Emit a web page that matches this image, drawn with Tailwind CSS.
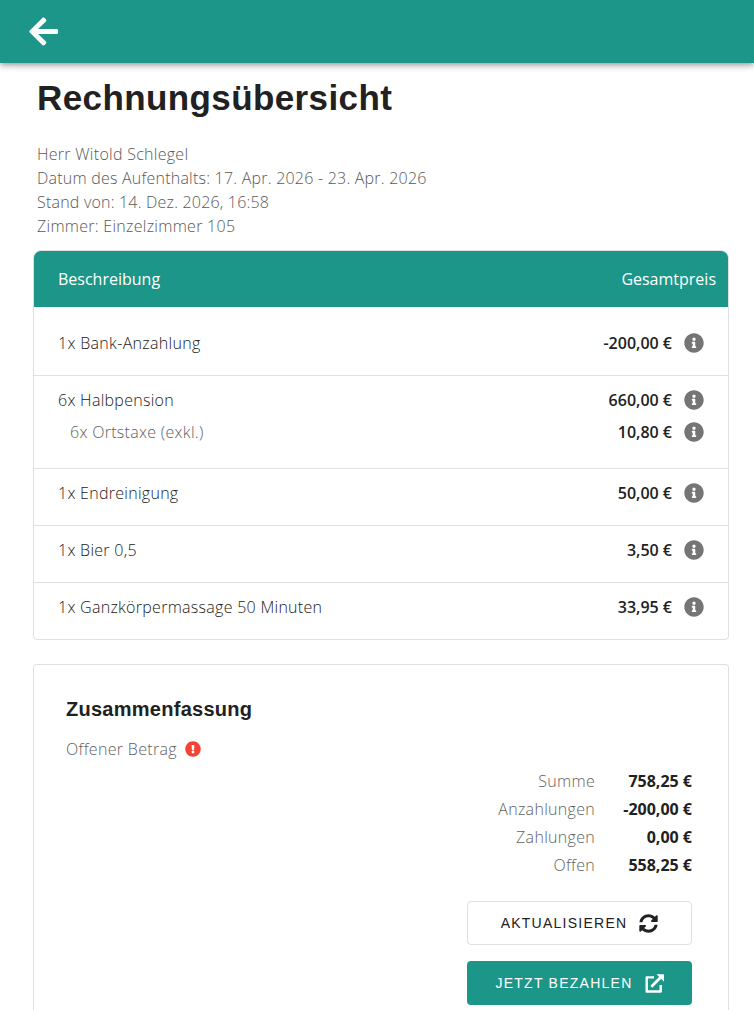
<!DOCTYPE html>
<html lang="de">
<head>
<meta charset="utf-8">
<title>Rechnungsübersicht</title>
<script src="https://cdn.jsdelivr.net/npm/@tailwindcss/browser@4"></script>
</head>
<body class="bg-white h-[1010px] overflow-hidden font-['Open_Sans',sans-serif] text-base leading-6 font-light text-[#212121]">
<svg class="hidden">
  <symbol id="info" viewBox="0 0 512 512"><path d="M256 8C119.043 8 8 119.083 8 256c0 136.997 111.043 248 248 248s248-111.003 248-248C504 119.083 392.957 8 256 8zm0 110c23.196 0 42 18.804 42 42s-18.804 42-42 42-42-18.804-42-42 18.804-42 42-42zm56 254c0 6.627-5.373 12-12 12h-88c-6.627 0-12-5.373-12-12v-24c0-6.627 5.373-12 12-12h12v-64h-12c-6.627 0-12-5.373-12-12v-24c0-6.627 5.373-12 12-12h64c6.627 0 12 5.373 12 12v100h12c6.627 0 12 5.373 12 12v24z"/></symbol>
</svg>
<header class="relative h-[63px] bg-[#1b9688] shadow-[0_2px_4px_-1px_rgba(0,0,0,0.2),0_4px_5px_0_rgba(0,0,0,0.14),0_1px_10px_0_rgba(0,0,0,0.12)] flex items-center pl-[28.5px] pb-px">
  <svg class="w-[29.5px] h-[33px] fill-white" viewBox="0 0 448 512"><path d="M257.5 445.1l-22.2 22.2c-9.4 9.4-24.6 9.4-33.9 0L7 273c-9.4-9.4-9.4-24.6 0-33.9L201.4 44.7c9.4-9.4 24.6-9.4 33.9 0l22.2 22.2c9.5 9.5 9.3 25-.4 34.3L136.6 216H424c13.3 0 24 10.7 24 24v32c0 13.3-10.7 24-24 24H136.6l120.5 114.8c9.8 9.3 10 24.8.4 34.3z"/></svg>
</header>
<main class="pl-[33px] pr-[25px]">
  <h1 class="pl-1 pt-[15px] font-['Liberation_Sans',sans-serif] font-bold text-[35px] leading-10 tracking-[0.4px]">Rechnungsübersicht</h1>
  <div class="pl-1 mt-6 text-[#585858] tracking-[0.28px]">
    <p>Herr Witold Schlegel</p>
    <p class="tracking-[0.22px]">Datum des Aufenthalts: 17. Apr. 2026 - 23. Apr. 2026</p>
    <p class="tracking-[0.2px]">Stand von: 14. Dez. 2026, 16:58</p>
    <p>Zimmer: Einzelzimmer 105</p>
  </div>
  <section class="mt-3 border border-[#e0e0e0] rounded-t-lg rounded-b overflow-hidden">
    <div class="h-14 bg-[#1b9688] text-white font-normal flex items-center justify-between pl-6 pr-3"><span>Beschreibung</span><span>Gesamtpreis</span></div>
    <div class="h-[69px] pt-6 pl-6 pr-6 border-b border-[#e0e0e0]">
      <div class="flex items-center"><span class="grow tracking-[0.32px]">1x Bank-Anzahlung</span><span class="font-semibold">-200,00 €</span><svg class="size-5 ml-3 mb-px fill-[#757575]"><use href="#info"/></svg></div>
    </div>
    <div class="h-[93px] pt-3 pl-6 pr-6 border-b border-[#e0e0e0]">
      <div class="flex items-center"><span class="grow tracking-[0.28px]">6x Halbpension</span><span class="font-semibold">660,00 €</span><svg class="size-5 ml-3 mb-px fill-[#757575]"><use href="#info"/></svg></div>
      <div class="flex items-center mt-2"><span class="grow pl-3 text-[#616161] tracking-[0.3px]">6x Ortstaxe (exkl.)</span><span class="font-semibold">10,80 €</span><svg class="size-5 ml-3 mb-px fill-[#757575]"><use href="#info"/></svg></div>
    </div>
    <div class="h-[57px] pt-3 pl-6 pr-6 border-b border-[#e0e0e0]">
      <div class="flex items-center"><span class="grow tracking-[0.28px]">1x Endreinigung</span><span class="font-semibold">50,00 €</span><svg class="size-5 ml-3 mb-px fill-[#757575]"><use href="#info"/></svg></div>
    </div>
    <div class="h-[57px] pt-3 pl-6 pr-6 border-b border-[#e0e0e0]">
      <div class="flex items-center"><span class="grow tracking-[0.28px]">1x Bier 0,5</span><span class="font-semibold">3,50 €</span><svg class="size-5 ml-3 mb-px fill-[#757575]"><use href="#info"/></svg></div>
    </div>
    <div class="h-14 pt-3 pl-6 pr-6">
      <div class="flex items-center"><span class="grow tracking-[0.28px]">1x Ganzkörpermassage 50 Minuten</span><span class="font-semibold">33,95 €</span><svg class="size-5 ml-3 mb-px fill-[#757575]"><use href="#info"/></svg></div>
    </div>
  </section>
  <section class="mt-6 h-[346px] border border-b-0 border-[#e0e0e0] rounded-t pl-8 pr-9 pt-7">
    <h2 class="font-['Liberation_Sans',sans-serif] font-bold text-xl leading-8 tracking-[0.27px]">Zusammenfassung</h2>
    <div class="mt-3 flex items-center text-[#616161] tracking-[0.32px]">Offener Betrag<svg class="size-4 ml-2 fill-[#f44336]" viewBox="0 0 512 512"><path d="M504 256c0 136.997-111.043 248-248 248S8 392.997 8 256C8 119.083 119.043 8 256 8s248 111.083 248 248zm-248 50c-25.405 0-46 20.595-46 46s20.595 46 46 46 46-20.595 46-46-20.595-46-46-46zm-43.673-165.346l7.418 136c.347 6.364 5.609 11.346 11.982 11.346h48.546c6.373 0 11.635-4.982 11.982-11.346l7.418-136c.375-6.874-5.098-12.654-11.982-12.654h-63.383c-6.884 0-12.356 5.78-11.981 12.654z"/></svg></div>
    <div class="mt-1.5 grid grid-cols-[1fr_97px] text-right leading-7">
      <span class="text-[#616161] tracking-[0.3px]">Summe</span><span class="font-bold">758,25 €</span>
      <span class="text-[#616161] tracking-[0.3px]">Anzahlungen</span><span class="font-bold">-200,00 €</span>
      <span class="text-[#616161] tracking-[0.3px]">Zahlungen</span><span class="font-bold">0,00 €</span>
      <span class="text-[#616161] tracking-[0.3px]">Offen</span><span class="font-bold">558,25 €</span>
    </div>
    <div class="mt-[22px] flex flex-col items-end gap-4 font-['Liberation_Sans',sans-serif] font-normal text-sm tracking-[1.25px]">
      <button class="w-[225px] h-11 border border-[#e0e0e0] rounded flex items-center justify-center">AKTUALISIEREN<svg class="size-[19px] ml-3 fill-current" viewBox="0 0 512 512"><path d="M370.72 133.28C339.458 104.008 298.888 87.962 255.848 88c-77.458.068-144.328 53.178-162.791 126.85-1.344 5.363-6.122 9.15-11.651 9.15H24.103c-7.498 0-13.194-6.807-11.807-14.176C33.933 94.924 134.813 8 256 8c66.448 0 126.791 26.136 171.315 68.685L463.03 40.97C478.149 25.851 504 36.559 504 57.941V192c0 13.255-10.745 24-24 24H345.941c-21.382 0-32.09-25.851-16.971-40.971l41.75-41.749zM32 296h134.059c21.382 0 32.09 25.851 16.971 40.971l-41.75 41.75c31.262 29.273 71.835 45.319 114.876 45.28 77.418-.07 144.315-53.144 162.787-126.849 1.344-5.363 6.122-9.15 11.651-9.15h57.304c7.498 0 13.194 6.807 11.807 14.176C478.067 417.076 377.187 504 256 504c-66.448 0-126.791-26.136-171.315-68.685L48.97 471.03C33.851 486.149 8 475.441 8 454.059V320c0-13.255 10.745-24 24-24z"/></svg></button>
      <button class="w-[225px] h-11 bg-[#1b9688] text-white rounded flex items-center justify-center">JETZT BEZAHLEN<svg class="size-[19px] ml-3" viewBox="0 0 19 19" fill="none" stroke="currentColor" stroke-width="2.4" stroke-linejoin="round"><path d="M9 3.4H1.7v14.1h14V11"/><path d="M6.3 12.7L15.5 3.5" stroke-width="2.8"/><path d="M11.5.3H18.3q.7 0 .7.7v6.8z" fill="currentColor" stroke="none"/></svg></button>
    </div>
  </section>
</main>
</body>
</html>
